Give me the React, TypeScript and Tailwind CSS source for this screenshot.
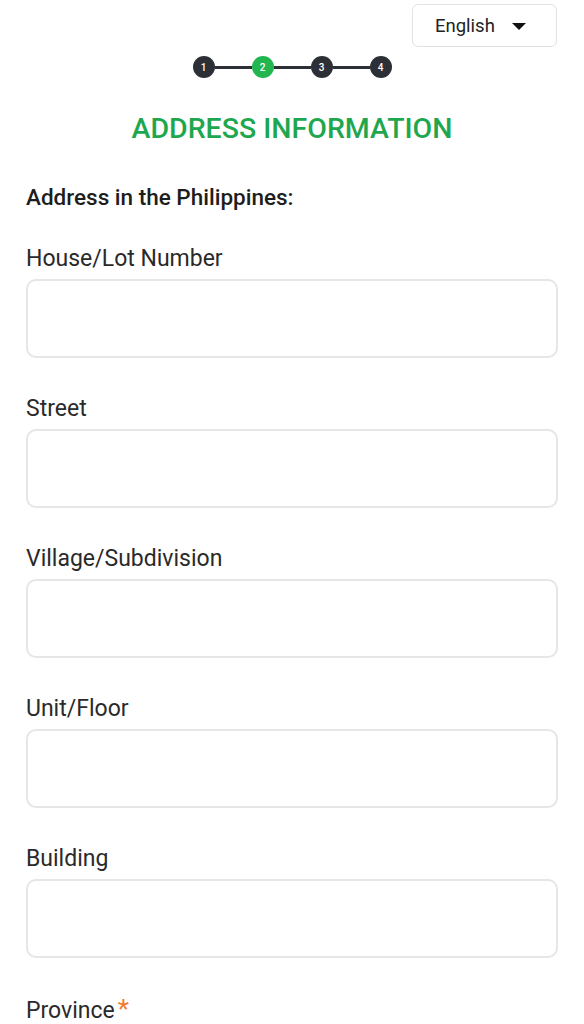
const fields = [
  { label: "House/Lot Number" },
  { label: "Street" },
  { label: "Village/Subdivision" },
  { label: "Unit/Floor" },
  { label: "Building" },
  { label: "Province", required: true },
];

const Stepper = () => {
  const steps = [1, 2, 3, 4];
  return (
    <div className="flex items-center justify-center">
      {steps.map((s, i) => (
        <div key={s} className="flex items-center">
          {i > 0 && <div className="h-[3px] w-[37px] bg-[#2c2f36]" />}
          <div
            className={
              "flex h-[22px] w-[22px] items-center justify-center rounded-full text-[10px] font-medium text-white " +
              (s === 2 ? "bg-[#22b550]" : "bg-[#2c2f36]")
            }
          >
            {s}
          </div>
        </div>
      ))}
    </div>
  );
};

export default function App() {
  return (
    <div className="h-screen overflow-hidden bg-white px-[26px] font-['Roboto',sans-serif] text-[#222]">
      <div className="flex justify-end pt-[4px] pr-[1px]">
        <button className="flex h-[43px] w-[145px] items-center gap-[17px] rounded-[6px] border border-[#e2e2e2] pt-[2px] pl-[22px] text-[18.5px] text-[#222]">
          <span>English</span>
          <svg width="14" height="8" viewBox="0 0 14 8">
            <path d="M0 0h14L7 7z" fill="#111" />
          </svg>
        </button>
      </div>
      <div className="mt-[9px]">
        <Stepper />
      </div>
      <h1 className="mt-[34px] text-center text-[28.5px] font-medium leading-[34px] text-[#1fa74f]">
        ADDRESS INFORMATION
      </h1>
      <h2 className="mt-[36px] text-[22.5px] font-medium leading-[30px] text-[#1d1d1d]">
        Address in the Philippines:
      </h2>
      <div className="mt-[32px]">
        {fields.map((f) => (
          <div key={f.label} className="mb-[36px]">
            <label className="block text-[23px] leading-[30px] text-[#2a2a2a]">
              {f.label}
              {f.required && <span className="ml-[3px] text-[26px] text-[#ef7b30]">*</span>}
            </label>
            <input
              type="text"
              className="mt-[5px] block h-[79px] w-full rounded-[10px] border-2 border-[#e6e6e6] bg-white px-4 text-[20px] outline-none"
            />
          </div>
        ))}
      </div>
    </div>
  );
}
